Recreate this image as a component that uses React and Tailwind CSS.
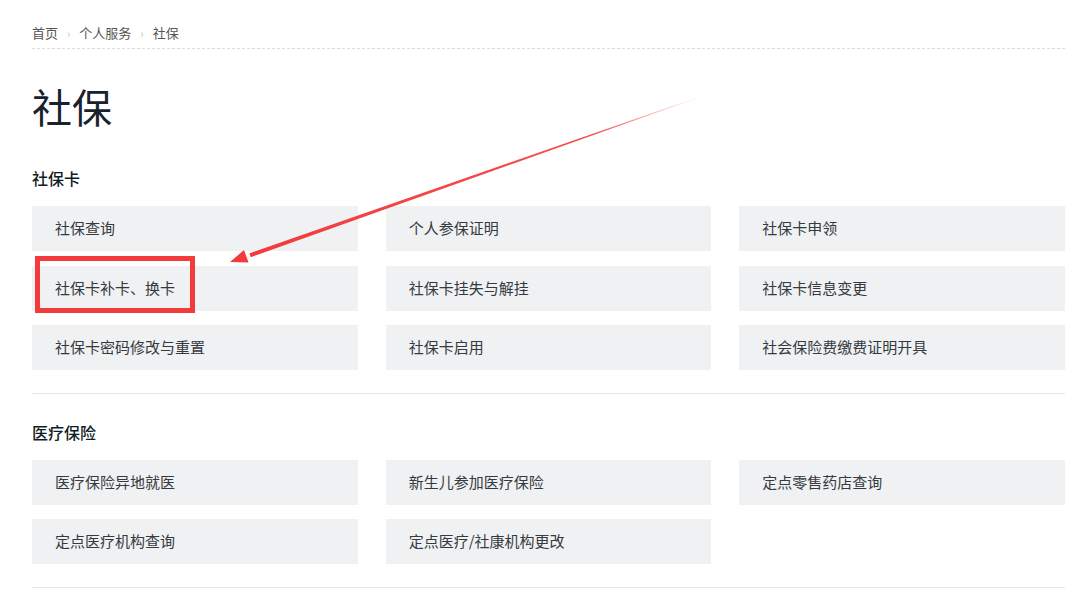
import React from "react";

const font = { fontFamily: '"Microsoft YaHei", "Noto Sans CJK SC", "Noto Sans", sans-serif' };

function Card({ children }) {
  return (
    <div className="h-[45px] bg-[#f0f1f3] flex items-center pl-[23px] text-[15px] text-[#333a40]">
      {children}
    </div>
  );
}

function Section({ title, items, pt, gy }) {
  return (
    <div className={`border-b border-[#e6e6e6] pb-[23px] ${pt}`}>
      <h2 className="text-[16px] leading-[24px] font-medium text-[#111c24] mb-[16px]">{title}</h2>
      <div className={`grid grid-cols-3 gap-x-[28px] ${gy}`}>
        {items.map((t) => (
          <Card key={t}>{t}</Card>
        ))}
      </div>
    </div>
  );
}

export default function App() {
  return (
    <div className="relative w-[1080px] h-[589px] overflow-hidden bg-white" style={font}>
      <div className="w-[1065px] pl-[32px] pt-[24px]">
        <div className="flex items-center text-[13px] leading-[18px] text-[#555] pb-[6px] border-b border-dashed border-[#dcdcdc]">
          <span>首页</span>
          <span className="mx-[9px] text-[#bbb] text-[11px]">›</span>
          <span>个人服务</span>
          <span className="mx-[9px] text-[#bbb] text-[11px]">›</span>
          <span>社保</span>
        </div>
        <h1 className="mt-[29px] text-[40px] leading-[56px] font-normal text-[#16222c]">社保</h1>
        <Section
          pt="pt-[32px]"
          gy="gap-y-[14.5px]"
          title="社保卡"
          items={[
            "社保查询",
            "个人参保证明",
            "社保卡申领",
            "社保卡补卡、换卡",
            "社保卡挂失与解挂",
            "社保卡信息变更",
            "社保卡密码修改与重置",
            "社保卡启用",
            "社会保险费缴费证明开具",
          ]}
        />
        <Section
          pt="pt-[26px]"
          gy="gap-y-[14px]"
          title="医疗保险"
          items={[
            "医疗保险异地就医",
            "新生儿参加医疗保险",
            "定点零售药店查询",
            "定点医疗机构查询",
            "定点医疗/社康机构更改",
          ]}
        />
      </div>

      {/* red highlight box */}
      <div className="absolute left-[35px] top-[256px] w-[160px] h-[57px] border-[5px] border-[#f33b3b] pointer-events-none" />

      {/* arrow */}
      <svg className="absolute left-0 top-0 pointer-events-none" width="1080" height="589" viewBox="0 0 1080 589">
        <defs>
          <linearGradient id="ag" gradientUnits="userSpaceOnUse" x1="705" y1="95" x2="250" y2="255">
            <stop offset="0" stopColor="#f33b3b" stopOpacity="0" />
            <stop offset="0.25" stopColor="#f33b3b" stopOpacity="0.9" />
            <stop offset="1" stopColor="#f33b3b" stopOpacity="1" />
          </linearGradient>
        </defs>
        <polygon points="705.1,95.3 704.9,94.7 249.3,253.4 250.7,257.2" fill="url(#ag)" />
        <polygon points="230,262 248.5,262.5 244,250" fill="#f33b3b" />
      </svg>
    </div>
  );
}
